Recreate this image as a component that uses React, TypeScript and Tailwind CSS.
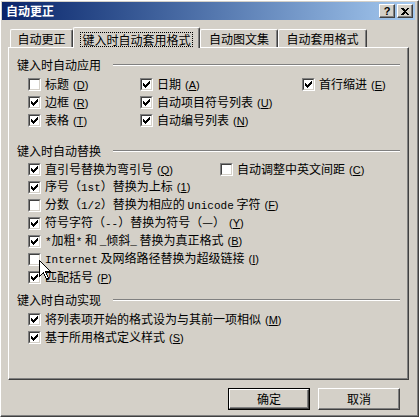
const CheckBox = ({ on }: { on?: boolean }) => (
  <span className="block w-[13px] h-[13px] shrink-0 border border-t-[#808080] border-l-[#808080] border-b-white border-r-white">
    <span className="block w-[11px] h-[11px] border border-t-[#404040] border-l-[#404040] border-b-[#d4d0c8] border-r-[#d4d0c8] bg-white">
      {on && (
        <svg width="9" height="9" viewBox="0 0 9 9" shapeRendering="crispEdges" className="block">
          <rect x="7" y="1" width="1" height="1" fill="#000" />
          <rect x="6" y="2" width="2" height="1" fill="#000" />
          <rect x="1" y="3" width="1" height="1" fill="#000" />
          <rect x="5" y="3" width="3" height="1" fill="#000" />
          <rect x="1" y="4" width="2" height="1" fill="#000" />
          <rect x="4" y="4" width="3" height="1" fill="#000" />
          <rect x="1" y="5" width="5" height="1" fill="#000" />
          <rect x="2" y="6" width="3" height="1" fill="#000" />
          <rect x="3" y="7" width="1" height="1" fill="#000" />
        </svg>
      )}
    </span>
  </span>
);

const Key = ({ k }: { k: string }) => (
  <span className="ml-[4px] text-[11px] font-['Liberation_Sans',sans-serif]">
    (<span className="underline underline-offset-1">{k}</span>)
  </span>
);

const M = ({ children }: { children: React.ReactNode }) => (
  <span className="text-[11px] font-['Liberation_Mono',monospace]">{children}</span>
);

const Item = ({
  on,
  k,
  children,
  className = "",
}: {
  on?: boolean;
  k: string;
  children: React.ReactNode;
  className?: string;
}) => (
  <div className={"flex items-center h-[18px] whitespace-pre " + className}>
    <CheckBox on={on} />
    <span className="ml-[4px]">
      {children}
      <Key k={k} />
    </span>
  </div>
);

const Heading = ({ text, className = "" }: { text: string; className?: string }) => (
  <div className={"flex items-center h-[14px] pl-[8px] pr-[8px] " + className}>
    <span>{text}</span>
    <div className="flex-1 ml-[12px] h-[2px] border-t border-t-[#808080] border-b border-b-white" />
  </div>
);

const Tab = ({ label, active, w }: { label: string; active?: boolean; w: string }) =>
  active ? (
    <div
      className={
        w +
        " h-[21px] -mb-px relative z-10 bg-[#d4d0c8] flex items-start justify-center pt-[4px] border-l border-t border-l-white border-t-white border-r border-r-[#404040] shadow-[inset_-1px_0_#808080] rounded-t-[2px]"
      }
    >
      <span className="border border-dotted border-black px-[1px] leading-[13px]">{label}</span>
    </div>
  ) : (
    <div
      className={
        w +
        " h-[18px] flex items-center justify-center border-l border-t border-l-white border-t-white border-r border-r-[#404040] shadow-[inset_-1px_0_#808080] rounded-t-[2px]"
      }
    >
      {label}
    </div>
  );

export default function App() {
  return (
    <div className="relative w-[419px] h-[417px] bg-[#d4d0c8] border border-t-white border-l-white border-r-[#404040] border-b-[#404040] shadow-[inset_-1px_-1px_#808080] p-[1px] pr-[3px] flex flex-col text-[12px] leading-[14px] text-black font-['Noto_Sans_CJK_SC',sans-serif]">
      {/* title bar */}
      <div className="h-[18px] shrink-0 flex items-center bg-linear-to-r from-[#0a246a] to-[#a6caf0] pl-[4px] pr-[2px]">
        <span className="text-white font-bold">自动更正</span>
        <div className="ml-auto flex gap-[2px]">
          <div className="w-[16px] h-[14px] bg-[#d4d0c8] border border-t-white border-l-white border-r-[#404040] border-b-[#404040] shadow-[inset_-1px_-1px_#808080] flex items-center justify-center font-bold text-[11px] leading-none font-['Liberation_Sans',sans-serif]">
            ?
          </div>
          <div className="w-[16px] h-[14px] bg-[#d4d0c8] border border-t-white border-l-white border-r-[#404040] border-b-[#404040] shadow-[inset_-1px_-1px_#808080] flex items-center justify-center">
            <svg width="8" height="7" viewBox="0 0 8 7" shapeRendering="crispEdges">
              <path d="M0 0h2l2 2 2-2h2L5 3.5 8 7H6L4 5 2 7H0l3-3.5z" fill="#000" />
            </svg>
          </div>
        </div>
      </div>

      {/* tabs */}
      <div className="mt-[7px] h-[20px] flex items-end pl-[8px]">
        <Tab label="自动更正" w="w-[63px]" />
        <Tab label="键入时自动套用格式" w="w-[127px]" active />
        <Tab label="自动图文集" w="w-[78px]" />
        <Tab label="自动套用格式" w="w-[89px]" />
      </div>

      {/* panel */}
      <div className="ml-[6px] w-[401px] h-[333px] border border-t-white border-l-white border-r-[#404040] border-b-[#404040] shadow-[inset_-1px_-1px_#808080] flex flex-col">
        <Heading text="键入时自动应用" className="mt-[10px]" />
        <div className="mt-[3px] pl-[19px] grid grid-cols-[112px_162px_1fr]">
          <Item k="D">标题</Item>
          <Item on k="A">日期</Item>
          <Item on k="E">首行缩进</Item>
          <Item on k="R">边框</Item>
          <Item on k="U">自动项目符号列表</Item>
          <div />
          <Item on k="T">表格</Item>
          <Item on k="N">自动编号列表</Item>
          <div />
        </div>

        <Heading text="键入时自动替换" className="mt-[15px]" />
        <div className="mt-[2px] pl-[19px] flex flex-col">
          <div className="flex">
            <Item on k="Q" className="w-[192px]">直引号替换为弯引号</Item>
            <Item k="C">自动调整中英文间距</Item>
          </div>
          <Item on k="1">
            序号（<M>1st</M>）替换为上标
          </Item>
          <Item k="F">
            分数（<M>1/2</M>）替换为相应的 <M>Unicode</M> 字符
          </Item>
          <Item on k="Y">
            符号字符（<M>--</M>）替换为符号（—）
          </Item>
          <Item on k="B">
            <M>*</M>加粗<M>*</M> 和 <M>_</M>倾斜<M>_</M> 替换为真正格式
          </Item>
          <Item k="I">
            <M>Internet</M> 及网络路径替换为超级链接
          </Item>
          <Item on k="P">匹配括号</Item>
        </div>

        <Heading text="键入时自动实现" className="mt-[7px]" />
        <div className="mt-[3px] pl-[19px] flex flex-col">
          <Item on k="M">将列表项开始的格式设为与其前一项相似</Item>
          <Item on k="S">基于所用格式定义样式</Item>
        </div>
      </div>

      {/* buttons */}
      <div className="mt-[8px] flex justify-end gap-[8px] pr-[15px]">
        <div className="w-[82px] h-[22px] border border-black">
          <div className="h-full flex items-center justify-center border border-t-white border-l-white border-r-[#404040] border-b-[#404040] shadow-[inset_-1px_-1px_#808080]">
            确定
          </div>
        </div>
        <div className="w-[82px] h-[22px] flex items-center justify-center border border-t-white border-l-white border-r-[#404040] border-b-[#404040] shadow-[inset_-1px_-1px_#808080]">
          取消
        </div>
      </div>

      {/* mouse pointer */}
      <svg
        className="absolute left-[38px] top-[259px]"
        width="13"
        height="21"
        viewBox="0 0 13 21"
        shapeRendering="crispEdges"
      >
        <path d="M0.5 0.5V16.5L4.5 12.5L7.5 19.5L9.5 18.5L6.5 11.5H11.5Z" fill="#fff" stroke="#000" />
      </svg>
    </div>
  );
}
